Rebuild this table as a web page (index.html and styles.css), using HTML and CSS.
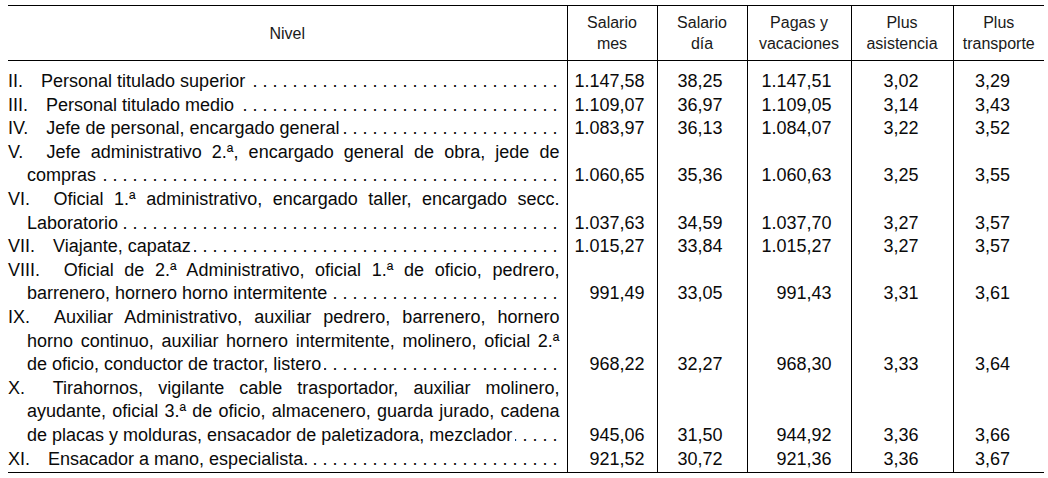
FILE: index.html
```html
<!DOCTYPE html>
<html lang="es">
<head>
<meta charset="utf-8">
<title>Tabla salarial</title>
<link rel="stylesheet" href="styles.css">
</head>
<body>
<table class="tabla">
  <colgroup>
    <col class="c-nivel"><col class="c-mes"><col class="c-dia"><col class="c-pagas"><col class="c-asis"><col class="c-trans">
  </colgroup>
  <thead>
    <tr>
      <th>Nivel</th>
      <th>Salario<br>mes</th>
      <th>Salario<br>día</th>
      <th>Pagas y<br>vacaciones</th>
      <th>Plus<br>asistencia</th>
      <th>Plus<br>transporte</th>
    </tr>
  </thead>
  <tbody>
    <tr class="first">
      <td class="nivel"><div class="desc"><span class="t"><span class="n">II.</span> Personal titulado superior</span></div></td>
      <td class="mes">1.147,58</td><td class="dia">38,25</td><td class="pagas">1.147,51</td><td class="asis">3,02</td><td class="trans">3,29</td>
    </tr>
    <tr>
      <td class="nivel"><div class="desc"><span class="t"><span class="n">III.</span> Personal titulado medio</span></div></td>
      <td class="mes">1.109,07</td><td class="dia">36,97</td><td class="pagas">1.109,05</td><td class="asis">3,14</td><td class="trans">3,43</td>
    </tr>
    <tr>
      <td class="nivel"><div class="desc"><span class="t"><span class="n">IV.</span> Jefe de personal, encargado general</span></div></td>
      <td class="mes">1.083,97</td><td class="dia">36,13</td><td class="pagas">1.084,07</td><td class="asis">3,22</td><td class="trans">3,52</td>
    </tr>
    <tr>
      <td class="nivel"><div class="desc"><span class="t"><span class="n">V.</span> Jefe administrativo 2.ª, encargado general de obra, jede de compras</span></div></td>
      <td class="mes">1.060,65</td><td class="dia">35,36</td><td class="pagas">1.060,63</td><td class="asis">3,25</td><td class="trans">3,55</td>
    </tr>
    <tr>
      <td class="nivel"><div class="desc"><span class="t"><span class="n">VI.</span> Oficial 1.ª administrativo, encargado taller, encargado secc. Laboratorio</span></div></td>
      <td class="mes">1.037,63</td><td class="dia">34,59</td><td class="pagas">1.037,70</td><td class="asis">3,27</td><td class="trans">3,57</td>
    </tr>
    <tr>
      <td class="nivel"><div class="desc"><span class="t"><span class="n">VII.</span> Viajante, capataz</span></div></td>
      <td class="mes">1.015,27</td><td class="dia">33,84</td><td class="pagas">1.015,27</td><td class="asis">3,27</td><td class="trans">3,57</td>
    </tr>
    <tr>
      <td class="nivel"><div class="desc"><span class="t"><span class="n">VIII.</span> Oficial de 2.ª Administrativo, oficial 1.ª de oficio, pedrero, barrenero, hornero horno intermitente</span></div></td>
      <td class="mes">991,49</td><td class="dia">33,05</td><td class="pagas">991,43</td><td class="asis">3,31</td><td class="trans">3,61</td>
    </tr>
    <tr>
      <td class="nivel"><div class="desc"><span class="t"><span class="n">IX.</span> Auxiliar Administrativo, auxiliar pedrero, barrenero, hornero horno continuo, auxiliar hornero intermitente, molinero, oficial 2.ª de oficio, conductor de tractor, listero</span></div></td>
      <td class="mes">968,22</td><td class="dia">32,27</td><td class="pagas">968,30</td><td class="asis">3,33</td><td class="trans">3,64</td>
    </tr>
    <tr>
      <td class="nivel"><div class="desc"><span class="t"><span class="n">X.</span> Tirahornos, vigilante cable trasportador, auxiliar molinero, ayudante, oficial 3.ª de oficio, almacenero, guarda jurado, cadena de placas y molduras, ensacador de paletizadora, mezclador</span></div></td>
      <td class="mes">945,06</td><td class="dia">31,50</td><td class="pagas">944,92</td><td class="asis">3,36</td><td class="trans">3,66</td>
    </tr>
    <tr class="last">
      <td class="nivel"><div class="desc"><span class="t"><span class="n">XI.</span> Ensacador a mano, especialista.</span></div></td>
      <td class="mes">921,52</td><td class="dia">30,72</td><td class="pagas">921,36</td><td class="asis">3,36</td><td class="trans">3,67</td>
    </tr>
  </tbody>
</table>
</body>
</html>
```

FILE: styles.css
```css
html, body {
  background: #fff;
}

body {
  margin: 0;
  padding: 5px 0 0 8px;
  color: #000;
  font-family: "Liberation Sans", Arial, sans-serif;
}

.tabla {
  border-collapse: collapse;
  table-layout: fixed;
  width: 1036px;
  border-top: 1px solid #000;
  border-bottom: 1px solid #000;
}

.c-nivel { width: 559px; }
.c-mes { width: 90px; }
.c-dia { width: 90px; }
.c-pagas { width: 104px; }
.c-asis { width: 102px; }
.c-trans { width: 91px; }

.tabla th {
  font-weight: normal;
  font-size: 16px;
  line-height: 21px;
  height: 54px;
  padding: 0;
  vertical-align: middle;
  text-align: center;
  color: #1a1a1a;
  border-bottom: 1px solid #000;
}

.tabla th + th,
.tabla td + td {
  border-left: 1px solid #000;
}

.tabla td {
  font-size: 18px;
  line-height: 23.6px;
  padding: 0;
  vertical-align: bottom;
  text-align: right;
  color: #0a0a0a;
}

.tabla tr.first td {
  padding-top: 9px;
}

.tabla tr.last td {
  padding-bottom: 1px;
}

.tabla td.nivel {
  text-align: left;
}

.tabla td.mes { padding-right: 12px; }
.tabla td.dia { padding-right: 24px; }
.tabla td.pagas { padding-right: 19px; }
.tabla td.asis { padding-right: 34px; }
.tabla td.trans { padding-right: 34px; }

.desc {
  position: relative;
  padding: 0 7px 0 19px;
  text-indent: -19px;
  text-align: justify;
}

.desc::before {
  content: ". . . . . . . . . . . . . . . . . . . . . . . . . . . . . . . . . . . . . . . . . . . . . . . . . . . . . . . . . . . . . . . . . . . . . . . . . .";
  position: absolute;
  left: 19px;
  right: 9px;
  bottom: 0;
  height: 23.6px;
  overflow: hidden;
  white-space: nowrap;
  direction: rtl;
  text-indent: 0;
}

.t {
  position: relative;
  background: #fff;
  padding-right: 3px;
}

.n {
  margin-right: 13px;
}
```
